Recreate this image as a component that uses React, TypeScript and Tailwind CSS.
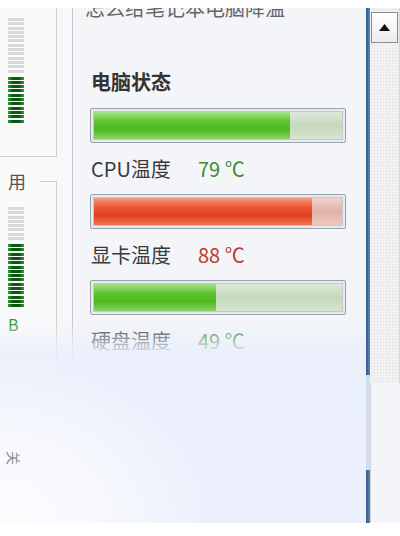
const temps = [
  { label: "CPU温度", value: 79, kind: "green" },
  { label: "显卡温度", value: 88, kind: "red" },
  { label: "硬盘温度", value: 49, kind: "green" },
];

function Meter({ gray, green }: { gray: number; green: number }) {
  return (
    <div className="flex flex-col w-[16px]">
      <div className="flex flex-col gap-[1.3px]">
        {new Array(gray).fill(null).map((_, i) => (
          <div key={i} className="h-[3px] bg-[#d9d9d9]" />
        ))}
      </div>
      <div className="flex flex-col gap-[1.3px] mt-[4px]">
        {new Array(green).fill(null).map((_, i) => (
          <div
            key={i}
            className="h-[3px] bg-[linear-gradient(to_right,#2f9e2f,#0c5512_30%,#0c5512_70%,#2f9e2f)]"
          />
        ))}
      </div>
    </div>
  );
}

function Bar({ pct, kind }: { pct: number; kind: string }) {
  const fill =
    kind === "red"
      ? "bg-[linear-gradient(to_bottom,#f39a82,#ec5434_35%,#e2401f_65%,#f07355)]"
      : "bg-[linear-gradient(to_bottom,#a9e28d,#5cc42c_35%,#4cb81b_65%,#8ad468)]";
  const track =
    kind === "red"
      ? "bg-[linear-gradient(to_bottom,#f0d2ca,#e2b2a6_50%,#ecc8be)]"
      : "bg-[linear-gradient(to_bottom,#dde8d8,#c5d8bd_50%,#d7e4d1)]";
  return (
    <div className="h-[35px] w-[256px] border border-[#9aa2ab] rounded-[2px] bg-[#e8ebee] p-[2px]">
      <div className="h-full w-full border border-[#c3c9cf] flex overflow-hidden">
        <div className={`h-full ${fill}`} style={{ width: `${pct}%` }} />
        <div className={`h-full flex-1 ${track}`} />
      </div>
    </div>
  );
}

export default function App() {
  return (
    <div className="relative w-[400px] h-[536px] bg-white overflow-hidden flex flex-col font-['Noto_Sans_CJK_SC',sans-serif]">
      <div className="h-2 shrink-0 bg-white" />
      <div className="flex h-[515px] shrink-0 overflow-hidden">
        {/* left meters */}
        <div className="w-[57px] flex flex-col bg-[#fafafa]">
          <div className="h-[149px] border-r border-b border-[#cfcfcf] pt-[10px] pl-2">
            <Meter gray={13} green={11} />
          </div>
          <div className="flex mt-[14px] h-[20px]">
            <span className="w-[40px] pl-2 text-[18px] leading-[20px] text-[#555]">用</span>
            <div className="flex-1 mt-[10px] border-t border-r border-[#cfcfcf]" />
          </div>
          <div className="flex-1 border-r border-[#cfcfcf] pt-[16px] pl-2">
            <Meter gray={8} green={15} />
            <div className="mt-[9px] text-[16px] leading-[16px] text-[#3a9a3a]">B</div>
          </div>
        </div>
        <div className="w-[16px] bg-[#f8f8f8] border-r border-[#c4c8d0]" />

        {/* main panel */}
        <div className="flex-1 bg-[#f3f5f9] pl-[17px] flex flex-col">
          <div className="-mt-[12px] h-[24px] ml-[-5px] text-[20px] leading-[24px] text-[#666] whitespace-nowrap">
            怎么给笔记本电脑降温
          </div>
          <div className="mt-[50px] h-[24px] ml-[1px] text-[20px] leading-[24px] font-bold text-[#333]">
            电脑状态
          </div>
          {temps.map((t, i) => (
            <div key={i} className={i === 0 ? "mt-[14px]" : "mt-[13px]"}>
              <Bar pct={t.value} kind={t.kind} />
              <div className="mt-[14px] h-[24px] flex ml-[1px] text-[20px] leading-[24px]">
                <span className="w-[107px] text-[#3a3a3a]">{t.label}</span>
                <span className={t.kind === "red" ? "text-[#c4392c]" : "text-[#3d8c35]"}>
                  {t.value} ℃
                </span>
              </div>
            </div>
          ))}
          <div className="mt-[14px] ml-[100px] w-[155px] h-[2px] border-t border-[#dde1e8] flex">
            <div className="ml-[90px] w-[25px] h-[2px] bg-[#d0d4dc]" />
          </div>
        </div>

        {/* scrollbar */}
        <div className="w-[4px] bg-[linear-gradient(to_right,#2c5787,#5e89b5)]" />
        <div className="w-[30px] bg-[#f2f2f2] bg-[radial-gradient(#dadada_0.6px,transparent_0.8px)] bg-[length:3px_3px] border-r border-[#d8d8d8]">
          <div className="mt-1 ml-[1px] w-[27px] h-[31px] border border-[#8a8a8a] bg-[linear-gradient(to_bottom,#ffffff,#ececec)] flex items-center justify-center">
            <svg width="11" height="7" viewBox="0 0 11 7">
              <polygon points="5.5,0 11,7 0,7" fill="#111" />
            </svg>
          </div>
        </div>
      </div>
      <div className="flex-1 bg-white" />

      {/* washed-out lower part of the photo */}
      <div className="absolute left-0 top-[322px] w-[366px] h-[201px] bg-[linear-gradient(to_bottom,rgba(234,239,252,0)_0px,rgba(234,239,252,0.85)_28px,rgba(234,239,252,0.97)_50px,rgba(236,240,252,0.98))]" />
      <div className="absolute left-0 top-[360px] w-[200px] h-[163px] bg-[radial-gradient(ellipse_at_bottom_left,rgba(253,253,255,0.95),rgba(253,253,255,0.6)_40%,rgba(253,253,255,0)_75%)] pl-[7px] pt-[88px]">
        <div className="w-[14px] h-[20px] flex items-center justify-center">
          <span className="rotate-90 text-[14px] leading-[14px] text-[#8a8d96]">关</span>
        </div>
      </div>
      <div className="absolute left-[366px] top-[375px] w-[4px] h-[95px] bg-[rgba(236,240,252,0.85)]" />
      <div className="absolute left-[370px] top-[383px] w-[30px] h-[140px] bg-[#f4f5f8] border-l border-[#d0d3d8]" />
    </div>
  );
}
